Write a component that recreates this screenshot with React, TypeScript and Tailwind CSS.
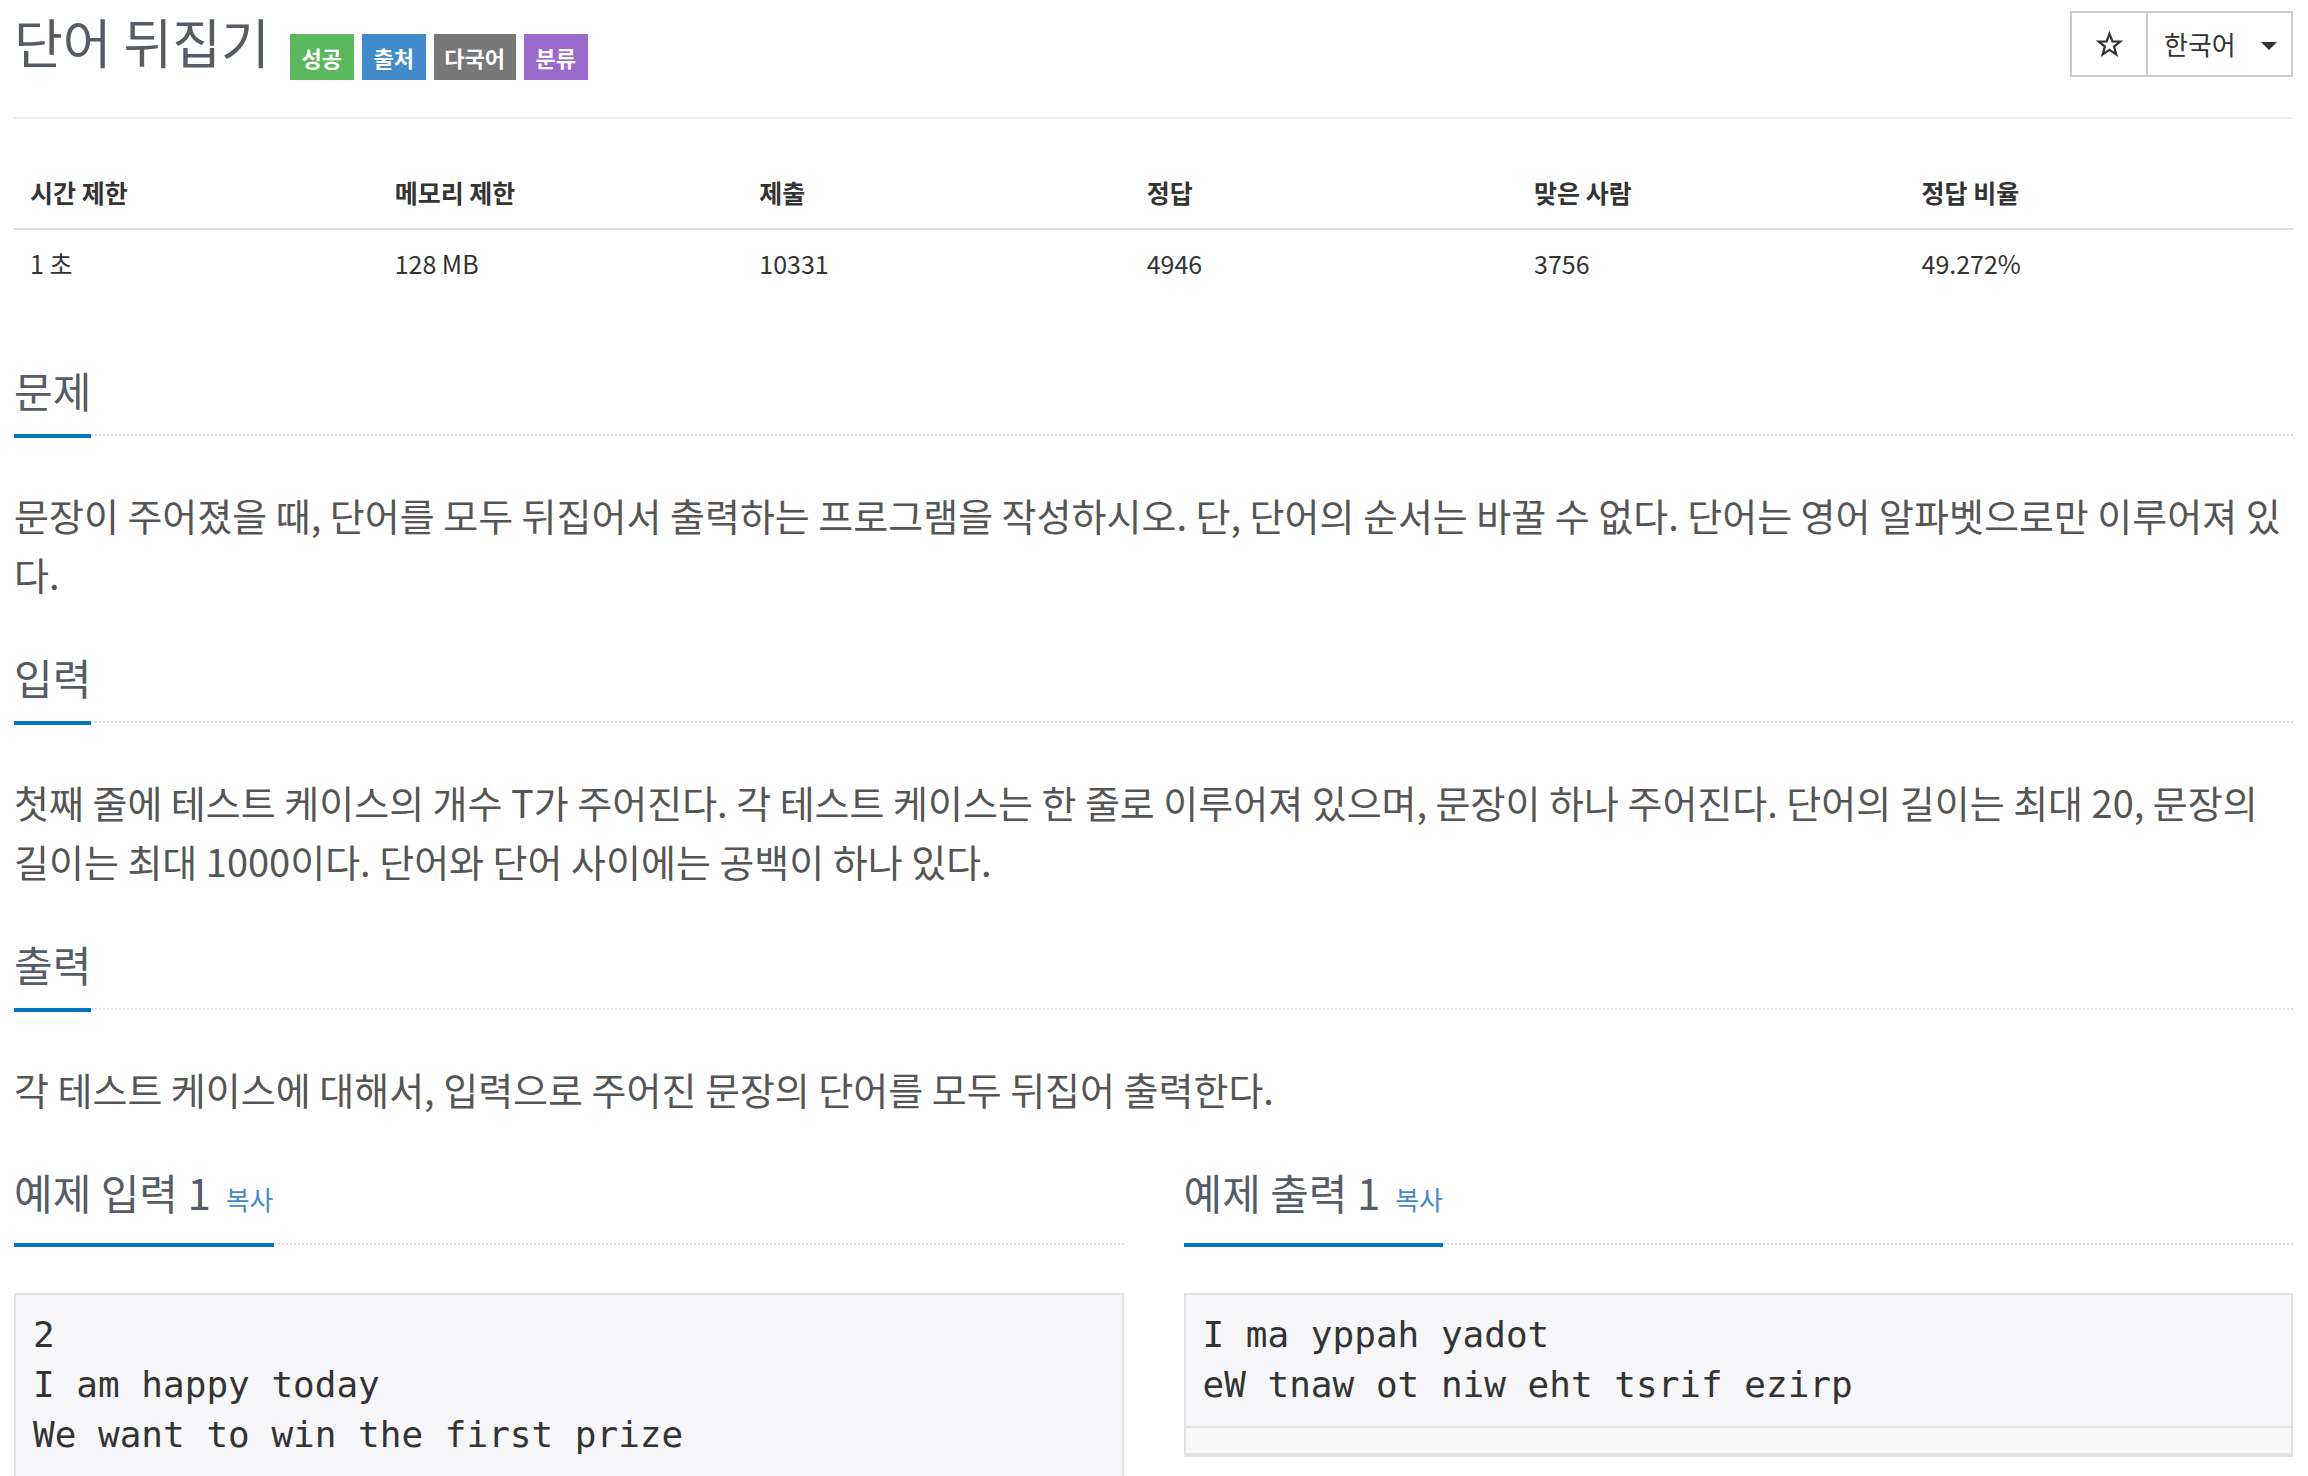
import React from "react";

const labels = [
  { text: "성공", cls: "bg-[#5cb85c] w-[64px]" },
  { text: "출처", cls: "bg-[#428bca] w-[64px]" },
  { text: "다국어", cls: "bg-[#777777] w-[82px]" },
  { text: "분류", cls: "bg-[#9a69cb] w-[64px]" },
];

const stats = [
  { head: "시간 제한", value: "1 초", w: "w-[16%]" },
  { head: "메모리 제한", value: "128 MB", w: "w-[16%]" },
  { head: "제출", value: "10331", w: "w-[17%]" },
  { head: "정답", value: "4946", w: "w-[17%]" },
  { head: "맞은 사람", value: "3756", w: "w-[17%]" },
  { head: "정답 비율", value: "49.272%", w: "w-[17%]" },
];

function Headline({ title, copy }: { title: string; copy?: boolean }) {
  return (
    <div className="flex border-b-2 border-dotted border-[#dddddd]">
      <h2 className="mb-[-4px] border-b-4 border-[#0076c0] pb-[20px] text-[42px] font-normal leading-[48px] text-[#555c66]">
        {title}
        {copy && (
          <a className="ml-[15px] cursor-pointer text-[26px] text-[#428bca]">복사</a>
        )}
      </h2>
    </div>
  );
}

function Section({ title, className, children }: { title: string; className: string; children: React.ReactNode }) {
  return (
    <section className={className}>
      <Headline title={title} />
      <div className="mt-[49px] text-[38px] leading-[59px] text-[#555555]">{children}</div>
    </section>
  );
}

function SampleBox({ lines }: { lines: string[] }) {
  return (
    <div className="mt-[48px] border-2 border-[#e1e1e8] bg-[#f7f7f9] font-['DejaVu_Sans_Mono',monospace] text-[36px] leading-[50px] text-[#333333]">
      <div className="whitespace-pre px-[17px] pt-[15px] pb-[16px]">{lines.join("\n")}</div>
      <div className="h-[29px] border-t-2 border-b-2 border-[#e4e4e8] bg-[#f9f9f9]" />
    </div>
  );
}

export default function App() {
  return (
    <div className="min-h-screen bg-white pl-[14px] pr-[15px] font-['Noto_Sans_CJK_KR','Noto_Sans',sans-serif]">
      <div className="flex h-[119px] items-start justify-between border-b-2 border-[#eeeeee]">
        <div className="flex items-start pt-[12px]">
          <h1 className="text-[53px] font-normal leading-[58px] text-[#555c66]">단어 뒤집기</h1>
          <div className="ml-[20px] mt-[22px] flex gap-[8px]">
            {labels.map((l) => (
              <span
                key={l.text}
                className={`${l.cls} flex h-[46px] items-center justify-center text-[22px] font-bold text-white`}
              >
                {l.text}
              </span>
            ))}
          </div>
        </div>
        <div className="mt-[11px] flex h-[66px] border-2 border-[#cccccc] text-[#333333]">
          <button className="flex w-[76px] items-center justify-center border-r-2 border-[#cccccc]">
            <svg width="27" height="27" viewBox="0 0 24 24" fill="none" stroke="#333" strokeWidth="2" strokeLinejoin="miter">
              <polygon points="12,2.5 14.6,9.2 21.6,9.4 16.1,13.8 18,20.8 12,16.8 6,20.8 7.9,13.8 2.4,9.4 9.4,9.2" />
            </svg>
          </button>
          <button className="flex w-[143px] items-center pl-[16px] pr-[14px]">
            <span className="text-[26px] leading-[30px]">한국어</span>
            <span className="ml-auto mt-[4px] h-0 w-0 border-x-[8px] border-t-[8px] border-x-transparent border-t-[#333333]" />
          </button>
        </div>
      </div>

      <table className="mt-[37px] w-full table-fixed border-collapse text-[25px] leading-[40px] text-[#333333]">
        <thead>
          <tr>
            {stats.map((s) => (
              <th key={s.head} className={`${s.w} border-b-2 border-[#dddddd] px-[16px] py-[16px] text-left font-bold`}>
                {s.head}
              </th>
            ))}
          </tr>
        </thead>
        <tbody>
          <tr>
            {stats.map((s) => (
              <td key={s.head} className="px-[16px] pt-[13px] pb-[16px]">
                {s.value}
              </td>
            ))}
          </tr>
        </tbody>
      </table>

      <Section title="문제" className="mt-[67px]">
        <p>
          문장이 주어졌을 때, 단어를 모두 뒤집어서 출력하는 프로그램을 작성하시오. 단, 단어의 순서는 바꿀 수 없다. 단어는 영어 알파벳으로만 이루어져 있다.
        </p>
      </Section>

      <Section title="입력" className="mt-[50px]">
        <p>
          첫째 줄에 테스트 케이스의 개수 T가 주어진다. 각 테스트 케이스는 한 줄로 이루어져 있으며, 문장이 하나 주어진다. 단어의 길이는 최대 20, 문장의 길이는 최대 1000이다. 단어와 단어 사이에는 공백이 하나 있다.
        </p>
      </Section>

      <Section title="출력" className="mt-[50px]">
        <p>각 테스트 케이스에 대해서, 입력으로 주어진 문장의 단어를 모두 뒤집어 출력한다.</p>
      </Section>

      <div className="mt-[50px] grid grid-cols-2 gap-x-[60px]">
        <section>
          <Headline title="예제 입력 1" copy />
          <SampleBox lines={["2", "I am happy today", "We want to win the first prize"]} />
        </section>
        <section>
          <Headline title="예제 출력 1" copy />
          <SampleBox lines={["I ma yppah yadot", "eW tnaw ot niw eht tsrif ezirp"]} />
        </section>
      </div>
    </div>
  );
}
